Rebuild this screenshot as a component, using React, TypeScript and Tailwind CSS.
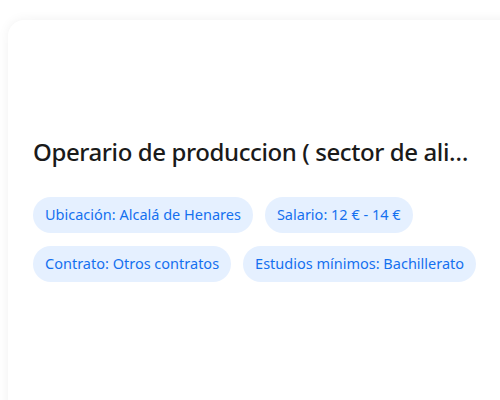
import React from 'react';

const tags = [
  'Ubicación: Alcalá de Henares',
  'Salario: 12 € - 14 €',
  'Contrato: Otros contratos',
  'Estudios mínimos: Bachillerato',
];

const App: React.FC = () => {
  return (
    <div className="w-[500px] h-[400px] overflow-hidden bg-white pt-5 pl-2" style={{ fontFamily: '"Noto Sans", "Open Sans", sans-serif' }}>
      <div className="w-[510px] h-[420px] bg-white rounded-tl-2xl shadow-[0_0_12px_rgba(0,0,0,0.06)] px-[25px] pt-[116px]">
        <h1 className="w-[440px] truncate text-[24px] leading-8 font-medium tracking-[-0.4px] text-[#1a1a1a]">
          Operario de produccion ( sector de alimentacion )
        </h1>
        <div className="mt-[29px] flex flex-wrap w-[450px] gap-x-3 gap-y-[13px]">
          {tags.map((t) => (
            <span key={t} className="h-9 px-3 flex items-center rounded-full bg-[#e5f0ff] text-[#1570ef] text-[14.5px]">
              {t}
            </span>
          ))}
        </div>
      </div>
    </div>
  );
};

export default App;
